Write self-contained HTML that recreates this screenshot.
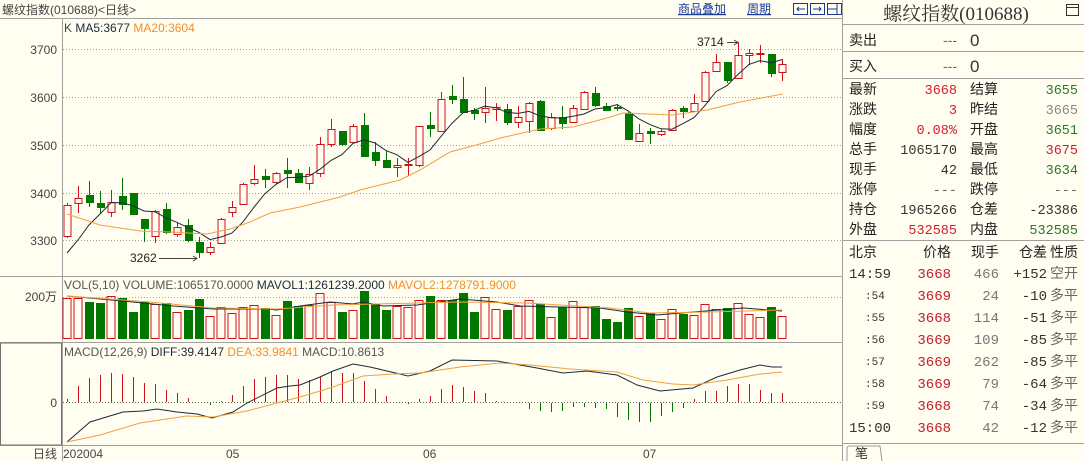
<!DOCTYPE html>
<html><head><meta charset="utf-8"><style>
html,body{margin:0;padding:0;background:#fffef0;width:1084px;height:461px;overflow:hidden}
svg{display:block;font-family:"Liberation Sans","Noto Sans CJK SC",sans-serif}
.m{font-family:"Liberation Mono","Noto Sans CJK SC",monospace}
</style></head><body>
<svg id="s" width="1084" height="461" xmlns="http://www.w3.org/2000/svg">
<rect width="1084" height="461" fill="#fffef0"/>
<!-- frames -->
<line x1="0" y1="18.5" x2="842" y2="18.5" stroke="#a0a0a0"/>
<line x1="62.5" y1="18" x2="62.5" y2="461" stroke="#a0a0a0"/>
<line x1="0" y1="276.5" x2="842" y2="276.5" stroke="#a0a0a0"/>
<line x1="0" y1="342.5" x2="842" y2="342.5" stroke="#a0a0a0"/>
<line x1="0" y1="445.5" x2="842" y2="445.5" stroke="#a0a0a0"/>
<rect x="0.5" y="343" width="61" height="102" fill="none" stroke="#707070"/>
<line x1="842.5" y1="0" x2="842.5" y2="461" stroke="#a0a0a0"/>
<g stroke="#a0a0a0" stroke-dasharray="1,2">
<line x1="63" y1="49.5" x2="842" y2="49.5"/><line x1="63" y1="97.5" x2="842" y2="97.5"/>
<line x1="63" y1="145.5" x2="842" y2="145.5"/><line x1="63" y1="193.5" x2="842" y2="193.5"/>
<line x1="63" y1="240.5" x2="842" y2="240.5"/><line x1="63" y1="297.5" x2="842" y2="297.5"/>
<line x1="63" y1="402.5" x2="842" y2="402.5" stroke="#507050"/>
</g>
<g font-size="12" fill="#444">
<text x="2" y="14">螺纹指数(010688)&lt;日线&gt;</text>
<text x="57" y="54" text-anchor="end">3700</text><text x="57" y="102" text-anchor="end">3600</text>
<text x="57" y="150" text-anchor="end">3500</text><text x="57" y="198" text-anchor="end">3400</text>
<text x="57" y="245" text-anchor="end">3300</text><text x="57" y="301" text-anchor="end">200万</text>
<text x="57" y="407" text-anchor="end">0</text><text x="57" y="458" text-anchor="end">日线</text>
<text x="63" y="458">202004</text><text x="226" y="458">05</text><text x="423" y="458">06</text><text x="643" y="458">07</text>
<text x="64" y="32">K <tspan fill="#1b2a3a">MA5:3677</tspan> <tspan fill="#f09030">MA20:3604</tspan></text>
<text x="64" y="289" fill="#555">VOL(5,10) VOLUME:1065170.0000 <tspan fill="#1b2a3a">MAVOL1:1261239.2000</tspan> <tspan fill="#f09030">MAVOL2:1278791.9000</tspan></text>
<text x="64" y="356" fill="#555">MACD(12,26,9) <tspan fill="#1b2a3a">DIFF:39.4147</tspan> <tspan fill="#f09030">DEA:33.9841</tspan> MACD:10.8613</text>
<text x="130" y="262" fill="#222">3262</text><text x="697" y="46" fill="#222">3714</text>
</g>
<path d="M159 258.5H197M193 256l4 2.5-4 2.5M727 42.5H738M734 40l4 2.5-4 2.5" stroke="#444" fill="none"/>
<g font-size="12" fill="#1a3a9a" text-decoration="underline">
<text x="678" y="13">商品叠加</text><text x="747" y="13">周期</text>
</g>
<g fill="none" stroke="#1a3a9a">
<rect x="793.5" y="3.5" width="14" height="11"/><path d="M797 9h8M799 7l-2 2 2 2"/>
<rect x="810.5" y="3.5" width="14" height="11"/><path d="M813 9h8M819 7l2 2-2 2"/>
<rect x="827.5" y="3.5" width="14" height="11"/><path d="M827 9h10M837 3v11"/>
</g>
<g id="chart"></g>
<!-- right panel -->
<text x="956" y="20" font-size="19" fill="#333" text-anchor="middle" font-family="Liberation Serif,Noto Serif CJK SC,serif">螺纹指数(010688)</text>
<rect x="1066.5" y="4.5" width="12" height="11" fill="none" stroke="#333"/><line x1="1067" y1="7.5" x2="1078" y2="7.5" stroke="#333"/>
<g stroke="#a0a0a0"><line x1="843" y1="24.5" x2="1084" y2="24.5"/><line x1="843" y1="51.5" x2="1084" y2="51.5"/><line x1="843" y1="78.5" x2="1084" y2="78.5"/><line x1="843" y1="240.5" x2="1084" y2="240.5"/><line x1="843" y1="443.5" x2="1084" y2="443.5"/></g>
<g font-size="14" fill="#222">
<text x="849" y="45">卖出</text><text x="849" y="71">买入</text>
<text x="957" y="45" text-anchor="end" fill="#666">---</text><text x="957" y="71" text-anchor="end" fill="#666">---</text>
<text x="970" y="46" font-size="17" fill="#333">0</text><text x="970" y="72" font-size="17" fill="#333">0</text>
<text x="849" y="94">最新</text><text x="849" y="114">涨跌</text><text x="849" y="134">幅度</text><text x="849" y="154">总手</text>
<text x="849" y="174">现手</text><text x="849" y="194">涨停</text><text x="849" y="214">持仓</text><text x="849" y="234">外盘</text>
<text x="970" y="94">结算</text><text x="970" y="114">昨结</text><text x="970" y="134">开盘</text><text x="970" y="154">最高</text>
<text x="970" y="174">最低</text><text x="970" y="194">跌停</text><text x="970" y="214">仓差</text><text x="970" y="234">内盘</text>
</g>
<g font-size="13.5" class="m" text-anchor="end">
<text x="957" y="94" fill="#d02030">3668</text><text x="957" y="114" fill="#d02030">3</text><text x="957" y="134" fill="#d02030">0.08%</text>
<text x="957" y="154" fill="#333">1065170</text><text x="957" y="174" fill="#333">42</text><text x="957" y="194" fill="#666">---</text>
<text x="957" y="214" fill="#333">1965266</text><text x="957" y="234" fill="#d02030">532585</text>
<text x="1078" y="94" fill="#2a7a2a">3655</text><text x="1078" y="114" fill="#888">3665</text><text x="1078" y="134" fill="#2a7a2a">3651</text>
<text x="1078" y="154" fill="#d02030">3675</text><text x="1078" y="174" fill="#2a7a2a">3634</text><text x="1078" y="194" fill="#666">---</text>
<text x="1078" y="214" fill="#333">-23386</text><text x="1078" y="234" fill="#2a7a2a">532585</text>
</g>
<g font-size="14" fill="#222">
<text x="849" y="257">北京</text><text x="951" y="257" text-anchor="end">价格</text><text x="999" y="257" text-anchor="end">现手</text>
<text x="1047" y="257" text-anchor="end">仓差</text><text x="1050" y="257">性质</text>
</g>
<g font-size="14" fill="#666"><text x="1050" y="278">空开</text><text x="1050" y="300">多平</text><text x="1050" y="322">多平</text><text x="1050" y="344">多平</text><text x="1050" y="366">多平</text><text x="1050" y="388">多平</text><text x="1050" y="410">多平</text><text x="1050" y="432">多平</text></g>
<g class="m" font-size="14" fill="#333"><text x="849" y="278">14:59</text><text x="849" y="432">15:00</text></g>
<g class="m" font-size="11" fill="#333"><text x="865" y="299">:54</text><text x="865" y="321">:55</text><text x="865" y="343">:56</text><text x="865" y="365">:57</text><text x="865" y="387">:58</text><text x="865" y="409">:59</text></g>
<g class="m" font-size="14" text-anchor="end">
<g fill="#c02030"><text x="951" y="278">3668</text><text x="951" y="300">3669</text><text x="951" y="322">3668</text><text x="951" y="344">3669</text><text x="951" y="366">3669</text><text x="951" y="388">3669</text><text x="951" y="410">3668</text><text x="951" y="432">3668</text></g>
<g fill="#777"><text x="999" y="278">466</text><text x="999" y="300">24</text><text x="999" y="322">114</text><text x="999" y="344">109</text><text x="999" y="366">262</text><text x="999" y="388">79</text><text x="999" y="410">74</text><text x="999" y="432">42</text></g>
<g fill="#333"><text x="1047" y="278">+152</text><text x="1047" y="300">-10</text><text x="1047" y="322">-51</text><text x="1047" y="344">-85</text><text x="1047" y="366">-85</text><text x="1047" y="388">-64</text><text x="1047" y="410">-34</text><text x="1047" y="432">-12</text></g>
</g>
<path d="M847 461V449Q847 446 850 446H880L882 461" fill="#fffef0" stroke="#999"/>
<text x="855" y="458" font-size="13" fill="#333">笔</text>
</svg>
<script>
var C=[[205,236,203,238,1],[198,203,186,213,1],[195,202,181,207,0],[203,207,191,213,0],[202,212,190,217,1],[196,204,178,210,0],[193,214,193,215,0],[219,228,219,242,0],[211,236,210,243,1],[209,232,203,234,0],[227,234,223,237,1],[225,240,219,242,0],[242,252,237,258,0],[247,252,242,255,1],[219,243,218,244,1],[207,212,201,217,1],[184,204,183,205,1],[179,183,165,185,1],[176,179,169,188,0],[173,182,172,184,1],[170,173,158,188,0],[173,182,169,183,0],[174,183,167,190,1],[144,173,137,177,1],[129,144,119,147,1],[131,144,131,146,0],[126,142,124,143,1],[125,156,113,157,0],[152,160,142,166,0],[160,167,151,168,0],[165,167,158,177,1],[164,165,158,176,1],[126,165,126,167,1],[125,128,112,137,0],[99,131,92,132,1],[96,99,85,104,0],[99,112,77,113,0],[110,113,108,120,0],[108,112,87,123,1],[107,109,103,121,1],[109,122,104,125,0],[117,122,106,128,1],[103,121,102,133,1],[101,130,100,131,0],[117,128,113,130,1],[117,123,106,129,0],[108,122,105,123,1],[92,109,91,110,1],[93,105,87,107,0],[106,110,103,111,0],[107,108,104,111,0],[113,139,112,140,0],[133,141,124,141,1],[131,133,128,144,0],[131,134,129,136,1],[110,130,109,131,1],[108,111,106,118,0],[103,111,94,111,1],[72,101,71,102,1],[62,71,54,72,1],[62,80,62,83,0],[55,78,42,78,1],[53,55,49,65,1],[53,54,45,63,1],[54,73,54,77,0],[64,72,59,81,1]];
var V=[[298,1],[298,1],[302,0],[303,0],[296,1],[298,0],[312,0],[302,0],[304,1],[303,0],[312,1],[310,0],[299,0],[316,1],[307,1],[313,1],[307,1],[305,1],[308,0],[315,1],[301,0],[306,0],[305,1],[293,1],[302,1],[312,0],[310,1],[291,0],[304,0],[310,0],[306,1],[307,1],[300,1],[296,0],[300,1],[300,0],[293,0],[312,0],[297,1],[309,1],[310,0],[306,1],[300,1],[304,0],[317,1],[307,0],[301,1],[307,1],[306,0],[319,0],[322,0],[308,0],[316,1],[313,0],[319,1],[309,1],[314,0],[315,1],[304,1],[309,1],[308,0],[303,1],[314,1],[317,1],[307,0],[316,1]];
var M=[399,386,378,375,373,374,377,383,384,390,393,398,402,405,401,395,386,379,377,375,375,379,380,377,371,373,373,381,389,396,402,404,399,396,389,385,387,391,393,401,402,402,409,411,412,411,407,407,408,409,417,420,422,422,416,412,408,399,391,391,386,384,384,390,393];
var R="#d0101c",G="#007800",o='';
function X(i){return 67+11*i}
for(var i=0;i<66;i++){var c=C[i],x=X(i),col=c[4]?R:G,h=Math.max(c[1]-c[0],1);
o+='<line x1="'+(x+.5)+'" y1="'+c[2]+'" x2="'+(x+.5)+'" y2="'+c[3]+'" stroke="'+col+'"/>';
if(c[4])o+='<rect x="'+(x-3)+'" y="'+(c[0]+.5)+'" width="7" height="'+h+'" fill="#fffef0" stroke="'+col+'"/>';
else o+='<rect x="'+(x-3)+'" y="'+c[0]+'" width="8" height="'+(h+1)+'" fill="'+col+'"/>';
var v=V[i];col=v[1]?R:G;
if(v[1])o+='<rect x="'+(x-4)+'" y="'+(v[0]+.5)+'" width="8" height="'+(338-v[0])+'" fill="none" stroke="'+col+'"/>';
else o+='<rect x="'+(x-4)+'" y="'+v[0]+'" width="9" height="'+(339-v[0])+'" fill="'+col+'"/>';
var m=i<M.length?M[i]:402;
if(m<402)o+='<line x1="'+(x+.5)+'" y1="'+m+'" x2="'+(x+.5)+'" y2="402" stroke="'+R+'"/>';
else if(m>403)o+='<line x1="'+(x+.5)+'" y1="403" x2="'+(x+.5)+'" y2="'+m+'" stroke="'+G+'"/>';
}
o+='<line x1="782.5" y1="393" x2="782.5" y2="402" stroke="'+R+'"/>';
var cl=C.map(function(c){return c[4]?c[0]:c[1]});var p=[[67,253],[78,240],[89,225],[100,214]];
for(i=4;i<66;i++){var s=0;for(var k=0;k<5;k++)s+=cl[i-k];p.push([X(i),s/5]);}
function pl(a,c){return '<polyline fill="none" stroke="'+c+'" points="'+a.map(function(q){return q.join(',')}).join(' ')+'"/>'}
o+=pl(p,"#1b2a3a");
o+=pl([[67,214],[100,225],[140,231],[170,232],[207,234],[230,229],[250,222],[270,213],[300,207],[340,197],[360,190],[400,180],[420,170],[450,152],[480,144],[500,138],[540,129],[573,127],[607,118],[623,113],[673,115],[707,110],[740,102],[783,94]],"#f0a040");
o+=pl([[67,296],[133,302],[173,306],[213,309],[267,309],[277,310],[300,306],[330,302],[353,304],[363,302],[383,306],[417,305],[460,299],[497,302],[520,306],[560,307],[600,308],[627,312],[657,315],[693,312],[743,308],[782,311]],"#1b2a3a");
o+=pl([[67,296],[150,302],[213,308],[277,309],[333,305],[417,303],[460,302],[527,303],[610,308],[650,313],[710,312],[782,310]],"#f0a040");
o+=pl([[67,442],[90,422],[123,412],[143,411],[157,409],[177,412],[197,414],[212,418],[233,412],[247,403],[277,388],[290,386],[300,385],[320,377],[333,371],[353,364],[370,367],[387,371],[408,376],[430,371],[452,360],[497,361],[537,368],[563,373],[587,371],[617,375],[637,385],[660,391],[693,388],[717,377],[740,370],[760,365],[772,367],[782,367]],"#1b2a3a");
o+=pl([[67,442],[100,435],[140,423],[187,416],[213,417],[247,411],[277,403],[307,395],[333,387],[363,376],[393,374],[420,373],[460,367],[500,363],[530,365],[570,369],[617,372],[643,380],[673,384],[693,385],[727,380],[760,374],[782,372]],"#f0a040");
document.getElementById("chart").innerHTML=o;
</script>
</body></html>
